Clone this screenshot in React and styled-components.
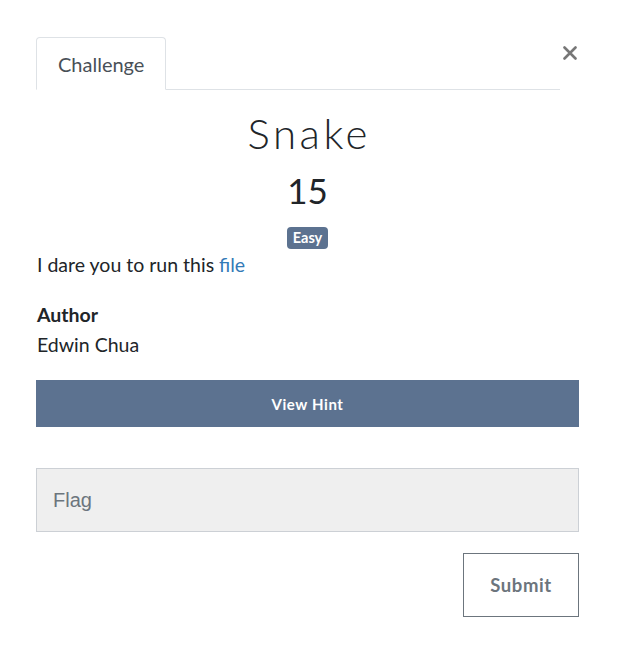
import React from "react";
import styled, {createGlobalStyle} from "styled-components";

const GlobalStyle = createGlobalStyle`
  body {
    margin: 0;
    background: #fff;
    font-family: Lato, "Open Sans", sans-serif;
    color: #212529;
  }
`;

const Modal = styled.div`
  width: 543px;
  padding: 37px 0 0 36px;
  display: flex;
  flex-direction: column;
`;

const HeaderRow = styled.div`
  display: flex;
  align-items: flex-start;
`;

const Tabs = styled.div`
  width: 524px;
  flex-shrink: 0;
  display: flex;
  border-bottom: 1px solid #dee2e6;
`;

const Tab = styled.div`
  height: 51px;
  padding: 0 21px;
  display: flex;
  align-items: center;
  font-size: 20px;
  color: #495057;
  border: 1px solid #dee2e6;
  border-bottom: 1px solid #fff;
  margin-bottom: -1px;
  border-radius: 4px 4px 0 0;
`;

const Close = styled.button`
  margin: 6px 0 0 0;
  border: none;
  background: none;
  padding: 0;
  width: 20px;
  height: 20px;
  display: flex;
  align-items: center;
  justify-content: center;
  cursor: pointer;
`;

const Title = styled.h2`
  margin: 18px 0 0;
  padding-left: 3.5px;
  text-align: center;
  font-weight: 300;
  font-size: 42px;
  line-height: 50px;
  letter-spacing: 3.5px;
`;

const Value = styled.h3`
  margin: 12px 0 0;
  text-align: center;
  font-weight: 400;
  font-size: 35px;
  line-height: 40px;
`;

const BadgeRow = styled.div`
  display: flex;
  justify-content: center;
  margin-top: 17px;
`;

const Badge = styled.span`
  background: #5c7290;
  color: #fff;
  font-weight: 700;
  font-size: 14.5px;
  line-height: 22px;
  padding: 0 6px;
  border-radius: 4px;
`;

const Text = styled.p`
  margin: ${p => p.$top || 0}px 0 0 1px;
  font-size: 19.5px;
  line-height: 24px;
  font-weight: ${p => (p.$bold ? 700 : 400)};
  a {
    color: #337ab7;
    text-decoration: none;
  }
`;

const HintButton = styled.button`
  margin-top: 23px;
  width: 543px;
  height: 47px;
  border: none;
  background: #5c7290;
  color: #fff;
  font-family: Lato, sans-serif;
  font-weight: 700;
  font-size: 15px;
  letter-spacing: 0.6px;
  cursor: pointer;
`;

const FlagInput = styled.input`
  margin-top: 41px;
  box-sizing: border-box;
  width: 543px;
  height: 64px;
  background: #efefef;
  border: 1px solid #ccd0d5;
  padding: 0 16px;
  font-family: "Liberation Sans", Arial, sans-serif;
  font-size: 20px;
  outline: none;
  &::placeholder {
    color: #6c757d;
  }
`;

const SubmitRow = styled.div`
  display: flex;
  justify-content: flex-end;
  margin-top: 21px;
`;

const SubmitButton = styled.button`
  width: 116px;
  height: 64px;
  background: #fff;
  border: 1px solid #6c757d;
  color: #6c757d;
  font-family: Lato, sans-serif;
  font-weight: 700;
  font-size: 18.5px;
  letter-spacing: 0.6px;
  cursor: pointer;
`;

export default function App() {
  return (
    <>
      <GlobalStyle/>
      <Modal>
        <HeaderRow>
          <Tabs>
            <Tab>Challenge</Tab>
          </Tabs>
          <Close aria-label="Close">
            <svg width="14" height="14" viewBox="0 0 14 14">
              <path d="M1.5 1.5L12.5 12.5M12.5 1.5L1.5 12.5" stroke="#777" strokeWidth="2.6" strokeLinecap="round"/>
            </svg>
          </Close>
        </HeaderRow>
        <Title>Snake</Title>
        <Value>15</Value>
        <BadgeRow><Badge>Easy</Badge></BadgeRow>
        <Text $top={4}>I dare you to run this <a href="#">file</a></Text>
        <Text $top={26} $bold>Author</Text>
        <Text $top={6}>Edwin Chua</Text>
        <HintButton>View Hint</HintButton>
        <FlagInput placeholder="Flag"/>
        <SubmitRow>
          <SubmitButton>Submit</SubmitButton>
        </SubmitRow>
      </Modal>
    </>
  );
}
